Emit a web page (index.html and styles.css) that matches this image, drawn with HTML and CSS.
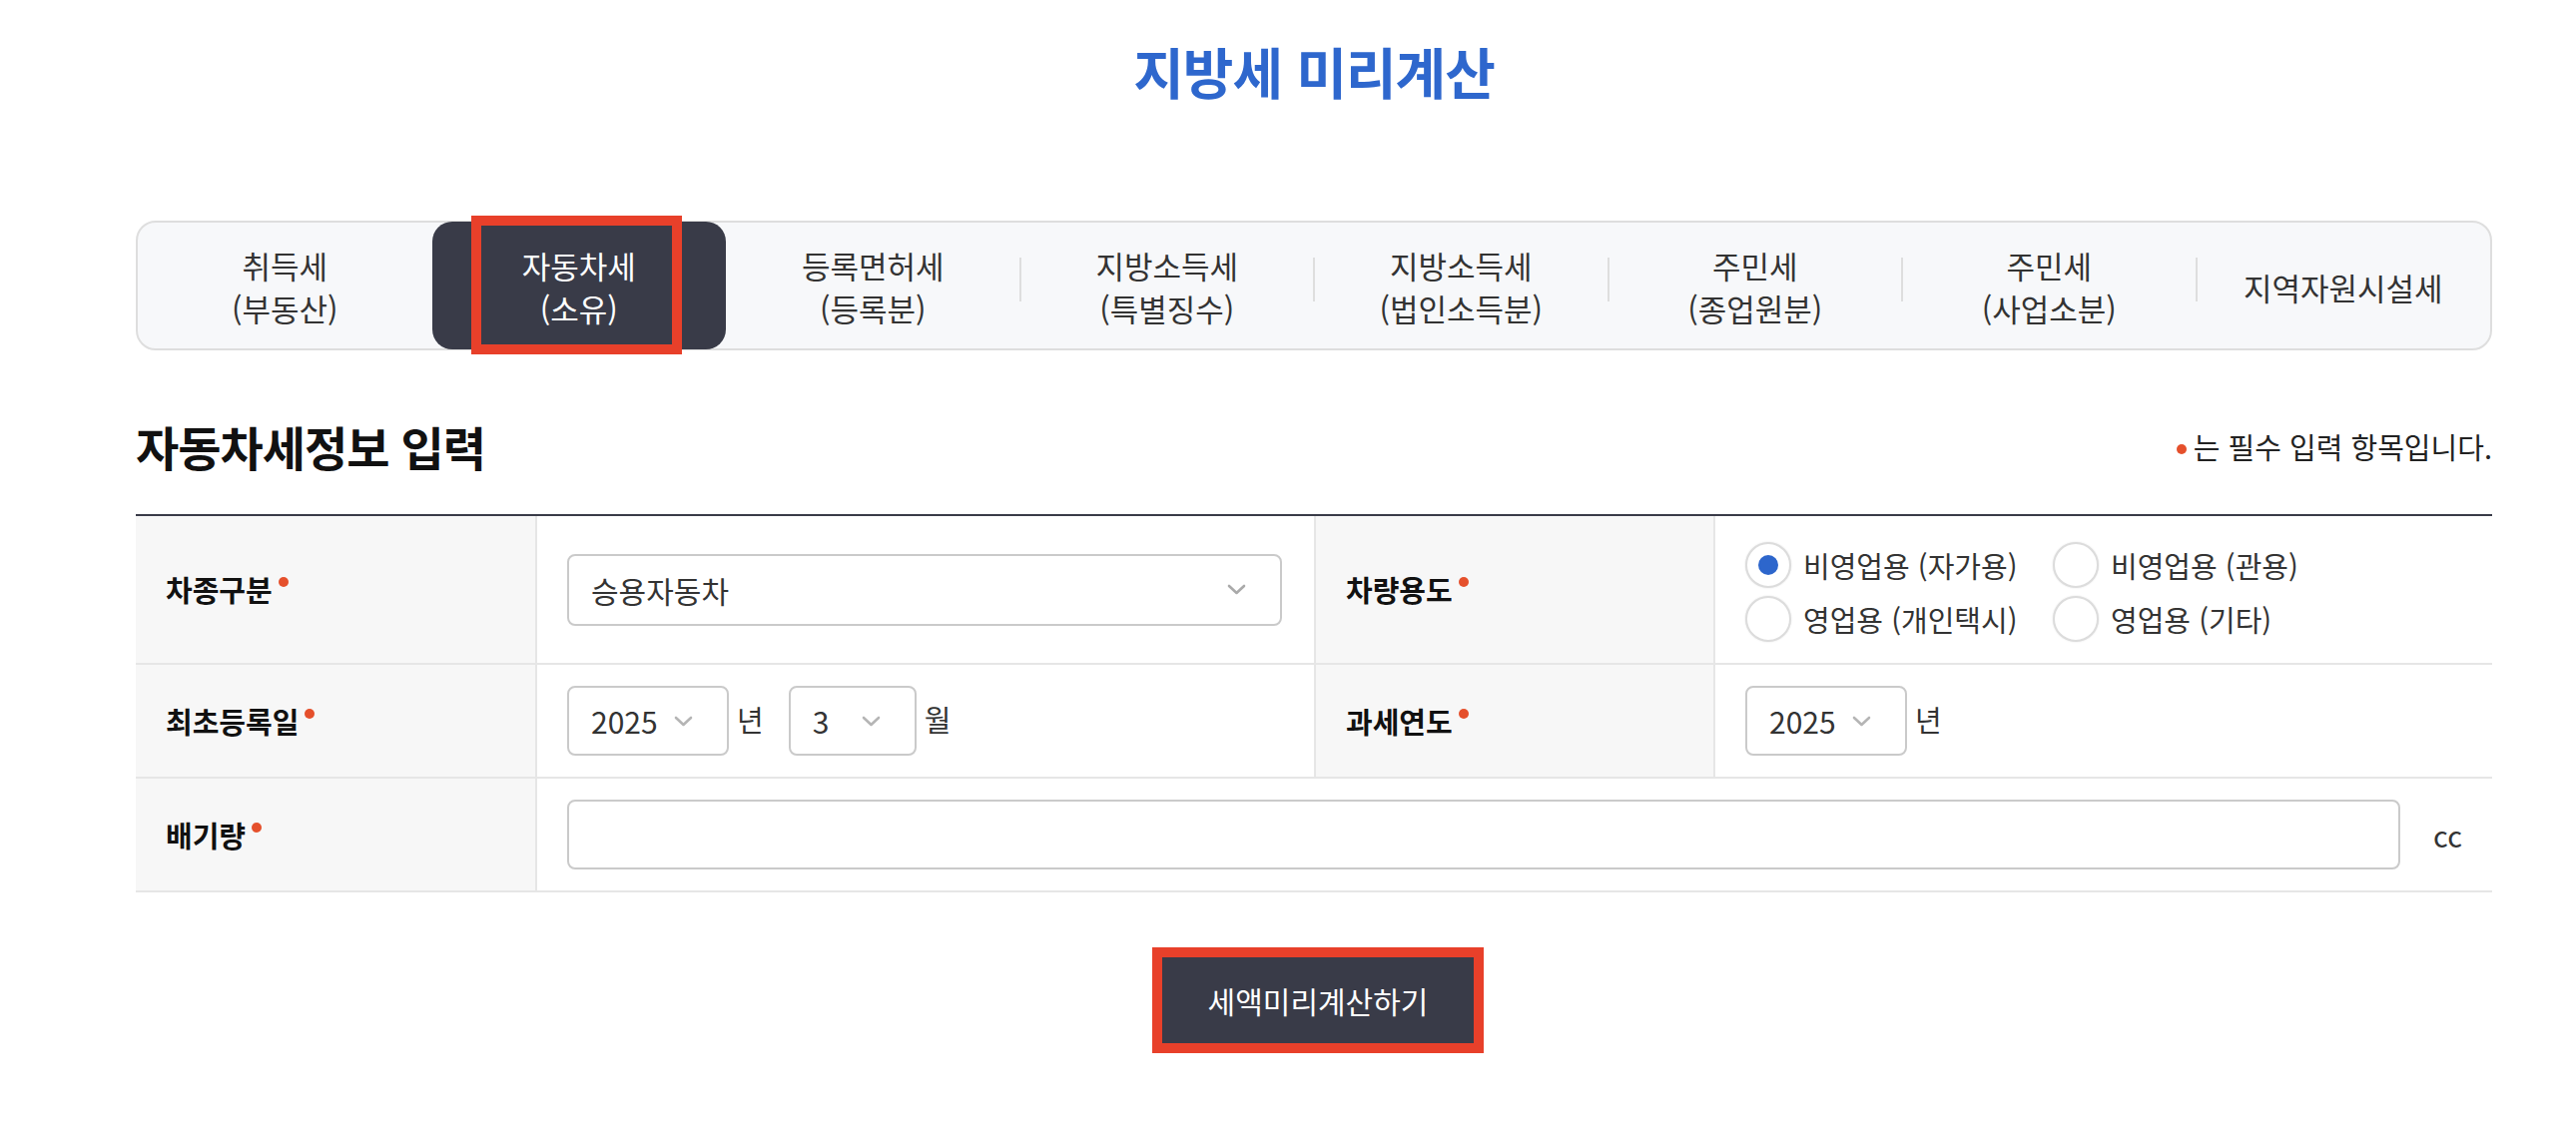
FILE: index.html
```
<!DOCTYPE html>
<html lang="ko">
<head>
<meta charset="utf-8">
<title>지방세 미리계산</title>
<link rel="stylesheet" href="styles.css">
</head>
<body>
<div class="page">
  <h1 class="title">지방세 미리계산</h1>

  <nav class="tabs">
    <div class="tab"><span>취득세<br>(부동산)</span></div>
    <div class="tab active"><span>자동차세<br>(소유)</span><i class="mark"></i></div>
    <div class="tab"><span>등록면허세<br>(등록분)</span></div>
    <div class="tab sep"><span>지방소득세<br>(특별징수)</span></div>
    <div class="tab sep"><span>지방소득세<br>(법인소득분)</span></div>
    <div class="tab sep"><span>주민세<br>(종업원분)</span></div>
    <div class="tab sep"><span>주민세<br>(사업소분)</span></div>
    <div class="tab sep"><span>지역자원시설세</span></div>
  </nav>

  <div class="section-head">
    <h2 class="heading">자동차세정보 입력</h2>
    <p class="note"><i class="dot"></i>는 필수 입력 항목입니다.</p>
  </div>

  <div class="form">
    <div class="th"><span class="label">차종구분<i class="req"></i></span></div>
    <div class="td mid">
      <div class="select wide">
        <span>승용자동차</span>
        <svg class="chev" width="19" height="11" viewBox="0 0 19 11"><polyline points="2,2 9.5,9 17,2" fill="none" stroke="#aaa" stroke-width="2.6" stroke-linecap="round" stroke-linejoin="round"/></svg>
      </div>
    </div>
    <div class="th"><span class="label">차량용도<i class="req"></i></span></div>
    <div class="td radios">
      <label class="radio"><i class="circle on"></i><span>비영업용 (자가용)</span></label>
      <label class="radio"><i class="circle"></i><span>비영업용 (관용)</span></label>
      <label class="radio"><i class="circle"></i><span>영업용 (개인택시)</span></label>
      <label class="radio"><i class="circle"></i><span>영업용 (기타)</span></label>
    </div>

    <div class="th"><span class="label">최초등록일<i class="req"></i></span></div>
    <div class="td mid">
      <div class="select year">
        <span>2025</span>
        <svg class="chev" width="19" height="11" viewBox="0 0 19 11"><polyline points="2,2 9.5,9 17,2" fill="none" stroke="#b5b5b5" stroke-width="2.6" stroke-linecap="round" stroke-linejoin="round"/></svg>
      </div>
      <span class="unit">년</span>
      <div class="select month">
        <span>3</span>
        <svg class="chev" width="19" height="11" viewBox="0 0 19 11"><polyline points="2,2 9.5,9 17,2" fill="none" stroke="#b5b5b5" stroke-width="2.6" stroke-linecap="round" stroke-linejoin="round"/></svg>
      </div>
      <span class="unit">월</span>
    </div>
    <div class="th"><span class="label">과세연도<i class="req"></i></span></div>
    <div class="td last">
      <div class="select year">
        <span>2025</span>
        <svg class="chev" width="19" height="11" viewBox="0 0 19 11"><polyline points="2,2 9.5,9 17,2" fill="none" stroke="#b5b5b5" stroke-width="2.6" stroke-linecap="round" stroke-linejoin="round"/></svg>
      </div>
      <span class="unit">년</span>
    </div>

    <div class="th"><span class="label">배기량<i class="req"></i></span></div>
    <div class="td span3">
      <div class="input"></div>
      <span class="cc">cc</span>
    </div>
  </div>

  <div class="actions">
    <button class="btn" type="button">세액미리계산하기</button>
  </div>
</div>
</body>
</html>
```

FILE: styles.css
```
* { box-sizing: border-box; }

html, body {
  margin: 0;
  padding: 0;
  background: #fff;
}

body {
  font-family: "Noto Sans CJK KR", "Noto Sans", sans-serif;
  color: #333;
  min-height: 1140px;
}

.page {
  width: 2360px;
  margin-left: 136px;
  padding-bottom: 95px;
}

.title {
  margin: 0;
  padding-top: 38px;
  height: 102px;
  line-height: 64px;
  font-size: 55px;
  font-weight: 700;
  letter-spacing: -1px;
  color: #2e67cd;
  text-align: center;
}

/* tabs */
.tabs {
  margin-top: 119px;
  display: flex;
  height: 130px;
  border: 2px solid #dedede;
  border-radius: 20px;
  background: #f7f8fa;
}

.tab {
  position: relative;
  flex: 1 1 0;
  display: flex;
  align-items: center;
  justify-content: center;
  text-align: center;
  font-size: 31px;
  line-height: 43px;
  color: #333;
}

.tab span { position: relative; top: 1px; }

.tab.sep::before {
  content: "";
  position: absolute;
  left: -1px;
  top: 35px;
  width: 2px;
  height: 44px;
  background: #dedede;
}

.tab.active {
  background: #393b48;
  color: #fff;
  border-radius: 20px;
  margin: -1px 0;
}

.mark {
  position: absolute;
  left: 39px;
  top: -6px;
  width: 211px;
  height: 139px;
  border: 10px solid #e8402a;
}

/* section head */
.section-head {
  margin-top: 66px;
  margin-bottom: 38px;
  height: 60px;
  display: flex;
  align-items: center;
  justify-content: space-between;
}

.heading {
  margin: 0;
  font-size: 47px;
  line-height: 60px;
  font-weight: 700;
  letter-spacing: -1px;
  color: #111;
}

.note {
  margin: 0;
  font-size: 29px;
  line-height: 40px;
  color: #222;
}

.dot {
  display: inline-block;
  width: 10px;
  height: 10px;
  border-radius: 50%;
  background: #e5502c;
  vertical-align: middle;
  margin: -4px 7px 0 0;
}

/* form grid */
.form {
  display: grid;
  grid-template-columns: 402px 780px 400px 778px;
  grid-template-rows: 149px 114px 114px;
  border-top: 2px solid #393b48;
}

.th,
.td {
  border-bottom: 2px solid #e6e6e6;
}

.th {
  background: #f7f7f7;
  border-right: 2px solid #e6e6e6;
  padding-left: 30px;
  display: flex;
  align-items: center;
}

.label {
  font-size: 29px;
  line-height: 29px;
  font-weight: 700;
  color: #111;
}

.req {
  display: inline-block;
  width: 10px;
  height: 10px;
  border-radius: 50%;
  background: #e5502c;
  vertical-align: top;
  margin: 2px 0 0 6px;
}

.td {
  display: flex;
  align-items: center;
  padding: 0 30px;
  font-size: 29px;
  color: #333;
}

.td.mid {
  border-right: 2px solid #e6e6e6;
  padding-right: 32px;
}

.td.span3 {
  grid-column: span 3;
}

/* select */
.select {
  height: 70px;
  display: flex;
  align-items: center;
  justify-content: space-between;
  border: 2px solid #cacaca;
  border-radius: 8px;
  background: #fff;
  padding: 0 34px 0 22px;
  font-size: 30px;
  color: #333;
}

.select.wide {
  width: 100%;
  height: 72px;
}

.select.year { width: 162px; }
.select.month { width: 128px; }

.chev { flex: none; }

.unit {
  margin: 0 25px 4px 8px;
  font-size: 29px;
  color: #333;
}

/* radios */
.td.radios {
  display: grid;
  grid-template-columns: 308px auto;
  grid-auto-rows: 54px;
  align-content: start;
  justify-content: start;
  padding-top: 22px;
}

.radio {
  display: flex;
  align-items: center;
  font-size: 29px;
  color: #333;
}

.circle {
  flex: none;
  width: 46px;
  height: 46px;
  border-radius: 50%;
  border: 2px solid #dcdcdc;
  background: #fff;
  box-shadow: 0 0 2px rgba(0, 0, 0, 0.12);
  margin-right: 12px;
  display: flex;
  align-items: center;
  justify-content: center;
}

.circle.on::after {
  content: "";
  width: 20px;
  height: 20px;
  border-radius: 50%;
  background: #2d66cc;
}

/* input */
.input {
  flex: 1 1 auto;
  height: 70px;
  border: 2px solid #cacaca;
  border-radius: 8px;
  background: #fff;
}

.cc {
  margin-left: 33px;
  font-size: 29px;
  color: #333;
}

/* button */
.actions {
  margin-top: 65px;
  display: flex;
  justify-content: center;
  padding-left: 8px;
}

.btn {
  width: 312px;
  height: 86px;
  border: none;
  background: #393b48;
  color: #fff;
  font-family: "Noto Sans CJK KR", "Noto Sans", sans-serif;
  font-size: 30px;
  outline: 10px solid #e8402a;
  outline-offset: 0;
  padding: 0;
}
```
